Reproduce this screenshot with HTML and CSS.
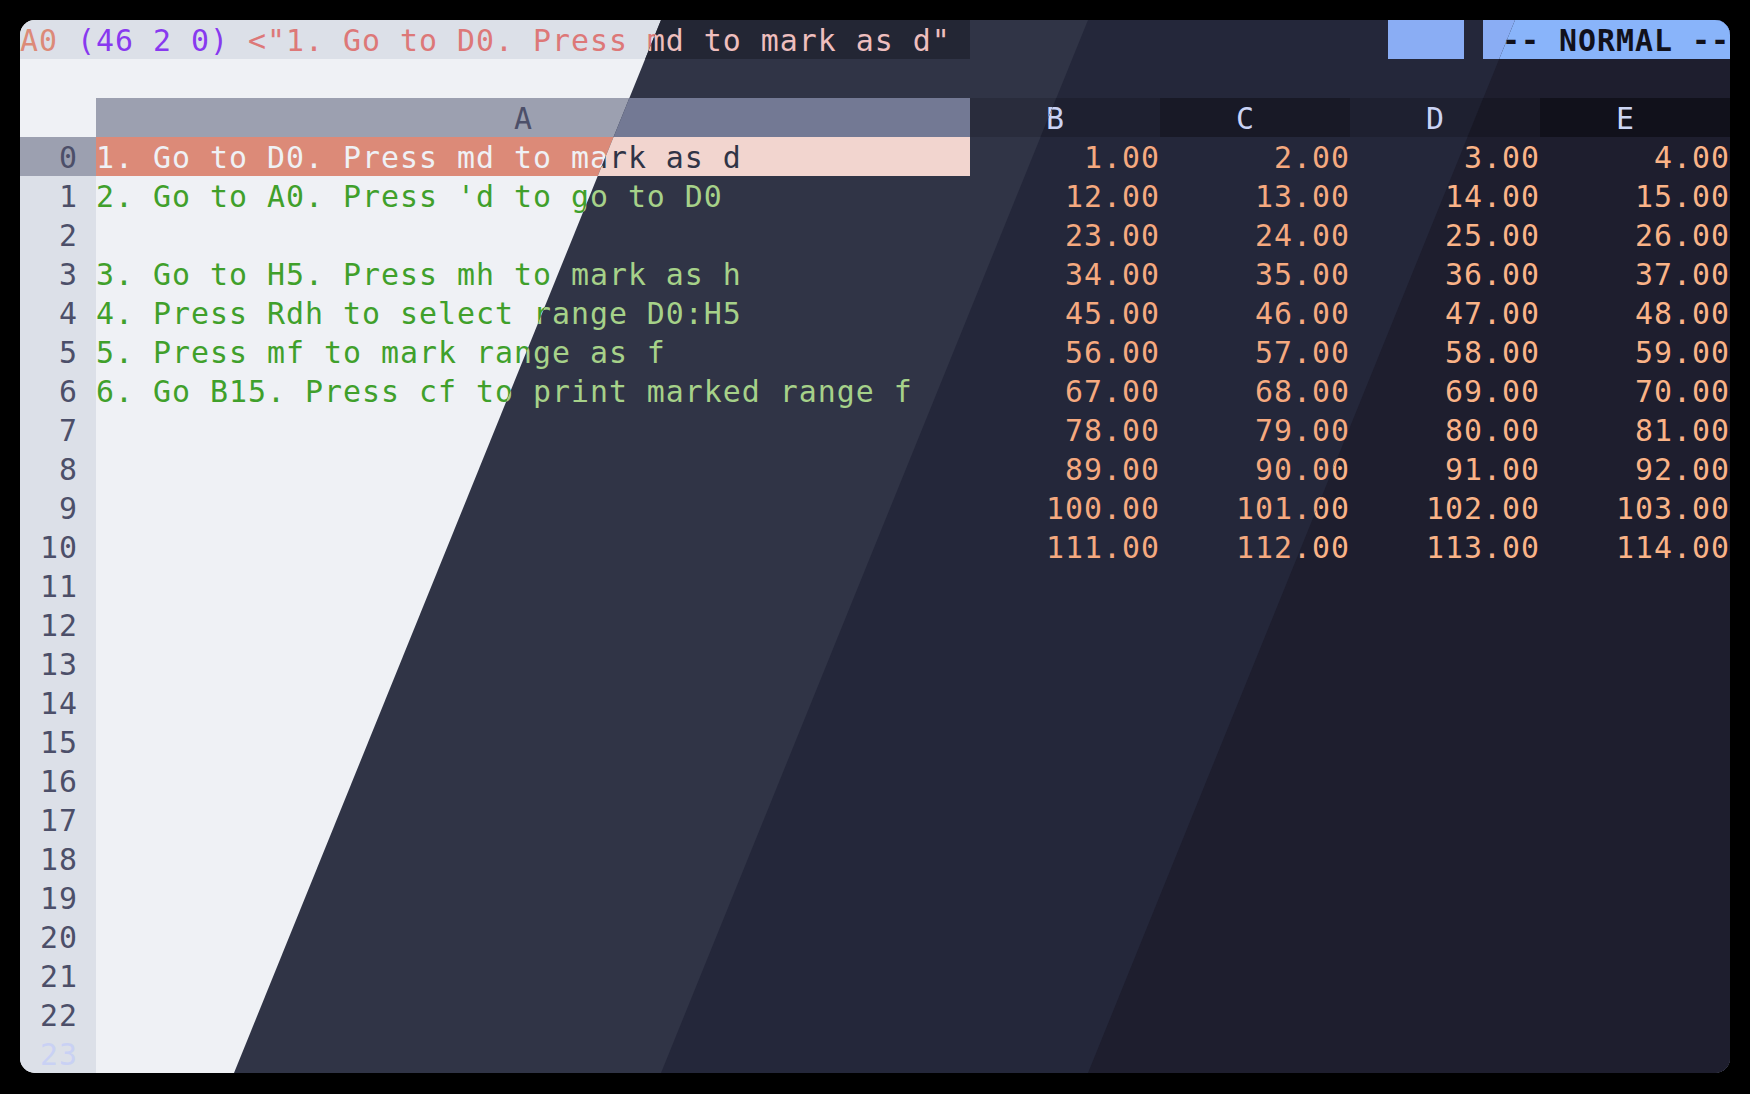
FILE: index.html
```html
<!DOCTYPE html>
<html lang="en">
<head>
<meta charset="utf-8">
<title>sc-im catppuccin</title>
<link rel="stylesheet" href="styles.css">
</head>
<body>
<div class="window">

<div class="layer latte">
<div class="line"><span class="st-text"><span class="rose">A0</span> <span class="mauve">(46 2 0)</span> <span class="flam">&lt;"1. Go to D0. Press md to mark as d"</span> </span><span class="st-gap"></span><span class="st-box"></span><span class="st-sp"></span><span class="st-mode"> -- NORMAL --</span></div>
<div class="line"></div>
<div class="line"><span class="hc"></span><span class="ha">A</span><span class="hb odd">B</span><span class="hb even">C</span><span class="hb odd">D</span><span class="hb even">E</span></div>
<div class="line"><span class="rn sel">0</span><span class="ca cur">1. Go to D0. Press md to mark as d</span><span class="num">1.00</span><span class="num">2.00</span><span class="num">3.00</span><span class="num">4.00</span></div>
<div class="line"><span class="rn">1</span><span class="ca">2. Go to A0. Press 'd to go to D0</span><span class="num">12.00</span><span class="num">13.00</span><span class="num">14.00</span><span class="num">15.00</span></div>
<div class="line"><span class="rn">2</span><span class="ca"></span><span class="num">23.00</span><span class="num">24.00</span><span class="num">25.00</span><span class="num">26.00</span></div>
<div class="line"><span class="rn">3</span><span class="ca">3. Go to H5. Press mh to mark as h</span><span class="num">34.00</span><span class="num">35.00</span><span class="num">36.00</span><span class="num">37.00</span></div>
<div class="line"><span class="rn">4</span><span class="ca">4. Press Rdh to select range D0:H5</span><span class="num">45.00</span><span class="num">46.00</span><span class="num">47.00</span><span class="num">48.00</span></div>
<div class="line"><span class="rn">5</span><span class="ca">5. Press mf to mark range as f</span><span class="num">56.00</span><span class="num">57.00</span><span class="num">58.00</span><span class="num">59.00</span></div>
<div class="line"><span class="rn">6</span><span class="ca">6. Go B15. Press cf to print marked range f</span><span class="num">67.00</span><span class="num">68.00</span><span class="num">69.00</span><span class="num">70.00</span></div>
<div class="line"><span class="rn">7</span><span class="ca"></span><span class="num">78.00</span><span class="num">79.00</span><span class="num">80.00</span><span class="num">81.00</span></div>
<div class="line"><span class="rn">8</span><span class="ca"></span><span class="num">89.00</span><span class="num">90.00</span><span class="num">91.00</span><span class="num">92.00</span></div>
<div class="line"><span class="rn">9</span><span class="ca"></span><span class="num">100.00</span><span class="num">101.00</span><span class="num">102.00</span><span class="num">103.00</span></div>
<div class="line"><span class="rn">10</span><span class="ca"></span><span class="num">111.00</span><span class="num">112.00</span><span class="num">113.00</span><span class="num">114.00</span></div>
<div class="line"><span class="rn">11</span></div>
<div class="line"><span class="rn">12</span></div>
<div class="line"><span class="rn">13</span></div>
<div class="line"><span class="rn">14</span></div>
<div class="line"><span class="rn">15</span></div>
<div class="line"><span class="rn">16</span></div>
<div class="line"><span class="rn">17</span></div>
<div class="line"><span class="rn">18</span></div>
<div class="line"><span class="rn">19</span></div>
<div class="line"><span class="rn">20</span></div>
<div class="line"><span class="rn">21</span></div>
<div class="line"><span class="rn">22</span></div>
<div class="line"><span class="rn faint">23</span></div>
</div>

<div class="layer frappe">
<div class="line"><span class="st-text"><span class="rose">A0</span> <span class="mauve">(46 2 0)</span> <span class="flam">&lt;"1. Go to D0. Press md to mark as d"</span> </span><span class="st-gap"></span><span class="st-box"></span><span class="st-sp"></span><span class="st-mode"> -- NORMAL --</span></div>
<div class="line"></div>
<div class="line"><span class="hc"></span><span class="ha">A</span><span class="hb odd">B</span><span class="hb even">C</span><span class="hb odd">D</span><span class="hb even">E</span></div>
<div class="line"><span class="rn sel">0</span><span class="ca cur">1. Go to D0. Press md to mark as d</span><span class="num">1.00</span><span class="num">2.00</span><span class="num">3.00</span><span class="num">4.00</span></div>
<div class="line"><span class="rn">1</span><span class="ca">2. Go to A0. Press 'd to go to D0</span><span class="num">12.00</span><span class="num">13.00</span><span class="num">14.00</span><span class="num">15.00</span></div>
<div class="line"><span class="rn">2</span><span class="ca"></span><span class="num">23.00</span><span class="num">24.00</span><span class="num">25.00</span><span class="num">26.00</span></div>
<div class="line"><span class="rn">3</span><span class="ca">3. Go to H5. Press mh to mark as h</span><span class="num">34.00</span><span class="num">35.00</span><span class="num">36.00</span><span class="num">37.00</span></div>
<div class="line"><span class="rn">4</span><span class="ca">4. Press Rdh to select range D0:H5</span><span class="num">45.00</span><span class="num">46.00</span><span class="num">47.00</span><span class="num">48.00</span></div>
<div class="line"><span class="rn">5</span><span class="ca">5. Press mf to mark range as f</span><span class="num">56.00</span><span class="num">57.00</span><span class="num">58.00</span><span class="num">59.00</span></div>
<div class="line"><span class="rn">6</span><span class="ca">6. Go B15. Press cf to print marked range f</span><span class="num">67.00</span><span class="num">68.00</span><span class="num">69.00</span><span class="num">70.00</span></div>
<div class="line"><span class="rn">7</span><span class="ca"></span><span class="num">78.00</span><span class="num">79.00</span><span class="num">80.00</span><span class="num">81.00</span></div>
<div class="line"><span class="rn">8</span><span class="ca"></span><span class="num">89.00</span><span class="num">90.00</span><span class="num">91.00</span><span class="num">92.00</span></div>
<div class="line"><span class="rn">9</span><span class="ca"></span><span class="num">100.00</span><span class="num">101.00</span><span class="num">102.00</span><span class="num">103.00</span></div>
<div class="line"><span class="rn">10</span><span class="ca"></span><span class="num">111.00</span><span class="num">112.00</span><span class="num">113.00</span><span class="num">114.00</span></div>
<div class="line"><span class="rn">11</span></div>
<div class="line"><span class="rn">12</span></div>
<div class="line"><span class="rn">13</span></div>
<div class="line"><span class="rn">14</span></div>
<div class="line"><span class="rn">15</span></div>
<div class="line"><span class="rn">16</span></div>
<div class="line"><span class="rn">17</span></div>
<div class="line"><span class="rn">18</span></div>
<div class="line"><span class="rn">19</span></div>
<div class="line"><span class="rn">20</span></div>
<div class="line"><span class="rn">21</span></div>
<div class="line"><span class="rn">22</span></div>
<div class="line"><span class="rn faint">23</span></div>
</div>

<div class="layer macchiato">
<div class="line"><span class="st-text"><span class="rose">A0</span> <span class="mauve">(46 2 0)</span> <span class="flam">&lt;"1. Go to D0. Press md to mark as d"</span> </span><span class="st-gap"></span><span class="st-box"></span><span class="st-sp"></span><span class="st-mode"> -- NORMAL --</span></div>
<div class="line"></div>
<div class="line"><span class="hc"></span><span class="ha">A</span><span class="hb odd">B</span><span class="hb even">C</span><span class="hb odd">D</span><span class="hb even">E</span></div>
<div class="line"><span class="rn sel">0</span><span class="ca cur">1. Go to D0. Press md to mark as d</span><span class="num">1.00</span><span class="num">2.00</span><span class="num">3.00</span><span class="num">4.00</span></div>
<div class="line"><span class="rn">1</span><span class="ca">2. Go to A0. Press 'd to go to D0</span><span class="num">12.00</span><span class="num">13.00</span><span class="num">14.00</span><span class="num">15.00</span></div>
<div class="line"><span class="rn">2</span><span class="ca"></span><span class="num">23.00</span><span class="num">24.00</span><span class="num">25.00</span><span class="num">26.00</span></div>
<div class="line"><span class="rn">3</span><span class="ca">3. Go to H5. Press mh to mark as h</span><span class="num">34.00</span><span class="num">35.00</span><span class="num">36.00</span><span class="num">37.00</span></div>
<div class="line"><span class="rn">4</span><span class="ca">4. Press Rdh to select range D0:H5</span><span class="num">45.00</span><span class="num">46.00</span><span class="num">47.00</span><span class="num">48.00</span></div>
<div class="line"><span class="rn">5</span><span class="ca">5. Press mf to mark range as f</span><span class="num">56.00</span><span class="num">57.00</span><span class="num">58.00</span><span class="num">59.00</span></div>
<div class="line"><span class="rn">6</span><span class="ca">6. Go B15. Press cf to print marked range f</span><span class="num">67.00</span><span class="num">68.00</span><span class="num">69.00</span><span class="num">70.00</span></div>
<div class="line"><span class="rn">7</span><span class="ca"></span><span class="num">78.00</span><span class="num">79.00</span><span class="num">80.00</span><span class="num">81.00</span></div>
<div class="line"><span class="rn">8</span><span class="ca"></span><span class="num">89.00</span><span class="num">90.00</span><span class="num">91.00</span><span class="num">92.00</span></div>
<div class="line"><span class="rn">9</span><span class="ca"></span><span class="num">100.00</span><span class="num">101.00</span><span class="num">102.00</span><span class="num">103.00</span></div>
<div class="line"><span class="rn">10</span><span class="ca"></span><span class="num">111.00</span><span class="num">112.00</span><span class="num">113.00</span><span class="num">114.00</span></div>
<div class="line"><span class="rn">11</span></div>
<div class="line"><span class="rn">12</span></div>
<div class="line"><span class="rn">13</span></div>
<div class="line"><span class="rn">14</span></div>
<div class="line"><span class="rn">15</span></div>
<div class="line"><span class="rn">16</span></div>
<div class="line"><span class="rn">17</span></div>
<div class="line"><span class="rn">18</span></div>
<div class="line"><span class="rn">19</span></div>
<div class="line"><span class="rn">20</span></div>
<div class="line"><span class="rn">21</span></div>
<div class="line"><span class="rn">22</span></div>
<div class="line"><span class="rn faint">23</span></div>
</div>

<div class="layer mocha">
<div class="line"><span class="st-text"><span class="rose">A0</span> <span class="mauve">(46 2 0)</span> <span class="flam">&lt;"1. Go to D0. Press md to mark as d"</span> </span><span class="st-gap"></span><span class="st-box"></span><span class="st-sp"></span><span class="st-mode"> -- NORMAL --</span></div>
<div class="line"></div>
<div class="line"><span class="hc"></span><span class="ha">A</span><span class="hb odd">B</span><span class="hb even">C</span><span class="hb odd">D</span><span class="hb even">E</span></div>
<div class="line"><span class="rn sel">0</span><span class="ca cur">1. Go to D0. Press md to mark as d</span><span class="num">1.00</span><span class="num">2.00</span><span class="num">3.00</span><span class="num">4.00</span></div>
<div class="line"><span class="rn">1</span><span class="ca">2. Go to A0. Press 'd to go to D0</span><span class="num">12.00</span><span class="num">13.00</span><span class="num">14.00</span><span class="num">15.00</span></div>
<div class="line"><span class="rn">2</span><span class="ca"></span><span class="num">23.00</span><span class="num">24.00</span><span class="num">25.00</span><span class="num">26.00</span></div>
<div class="line"><span class="rn">3</span><span class="ca">3. Go to H5. Press mh to mark as h</span><span class="num">34.00</span><span class="num">35.00</span><span class="num">36.00</span><span class="num">37.00</span></div>
<div class="line"><span class="rn">4</span><span class="ca">4. Press Rdh to select range D0:H5</span><span class="num">45.00</span><span class="num">46.00</span><span class="num">47.00</span><span class="num">48.00</span></div>
<div class="line"><span class="rn">5</span><span class="ca">5. Press mf to mark range as f</span><span class="num">56.00</span><span class="num">57.00</span><span class="num">58.00</span><span class="num">59.00</span></div>
<div class="line"><span class="rn">6</span><span class="ca">6. Go B15. Press cf to print marked range f</span><span class="num">67.00</span><span class="num">68.00</span><span class="num">69.00</span><span class="num">70.00</span></div>
<div class="line"><span class="rn">7</span><span class="ca"></span><span class="num">78.00</span><span class="num">79.00</span><span class="num">80.00</span><span class="num">81.00</span></div>
<div class="line"><span class="rn">8</span><span class="ca"></span><span class="num">89.00</span><span class="num">90.00</span><span class="num">91.00</span><span class="num">92.00</span></div>
<div class="line"><span class="rn">9</span><span class="ca"></span><span class="num">100.00</span><span class="num">101.00</span><span class="num">102.00</span><span class="num">103.00</span></div>
<div class="line"><span class="rn">10</span><span class="ca"></span><span class="num">111.00</span><span class="num">112.00</span><span class="num">113.00</span><span class="num">114.00</span></div>
<div class="line"><span class="rn">11</span></div>
<div class="line"><span class="rn">12</span></div>
<div class="line"><span class="rn">13</span></div>
<div class="line"><span class="rn">14</span></div>
<div class="line"><span class="rn">15</span></div>
<div class="line"><span class="rn">16</span></div>
<div class="line"><span class="rn">17</span></div>
<div class="line"><span class="rn">18</span></div>
<div class="line"><span class="rn">19</span></div>
<div class="line"><span class="rn">20</span></div>
<div class="line"><span class="rn">21</span></div>
<div class="line"><span class="rn">22</span></div>
<div class="line"><span class="rn faint">23</span></div>
</div>

</div>
</body>
</html>
```
FILE: styles.css
```css
* {
  box-sizing: border-box;
  margin: 0;
  padding: 0;
}

html {
  background: #000;
}

body {
  background: #000;
  padding: 20px;
  font-family: "DejaVu Sans Mono", monospace;
  font-size: 29.9px;
  letter-spacing: 1px;
  line-height: 39px;
}

.window {
  width: 1710px;
  height: 1053px;
  border-radius: 15px;
  overflow: hidden;
  display: grid;
}

.layer {
  grid-area: 1 / 1;
  display: flex;
  flex-direction: column;
  background: var(--base);
  color: var(--text);
}

.latte {
  --base: #eff1f5; --mantle: #e6e9ef; --crust: #dce0e8; --text: #4c4f69;
  --ov0: #9ca0b0; --rose: #dc8a78; --flam: #dd7878; --mauve: #8839ef;
  --green: #40a02b; --peach: #fe640b; --blue: #1e66f5;
}
.frappe {
  --base: #303446; --mantle: #292c3c; --crust: #232634; --text: #c6d0f5;
  --ov0: #737994; --rose: #f2d5cf; --flam: #eebebe; --mauve: #ca9ee6;
  --green: #a6d189; --peach: #ef9f76; --blue: #8caaee;
  clip-path: polygon(641px 0, 100% 0, 100% 100%, 214px 100%);
}
.macchiato {
  --base: #24273a; --mantle: #1e2030; --crust: #181926; --text: #cad3f5;
  --ov0: #6e738d; --rose: #f4dbd6; --flam: #f0c6c6; --mauve: #c6a0f6;
  --green: #a6da95; --peach: #f5a97f; --blue: #8aadf4;
  clip-path: polygon(1068px 0, 100% 0, 100% 100%, 641px 100%);
}
.mocha {
  --base: #1e1e2e; --mantle: #181825; --crust: #11111b; --text: #cdd6f4;
  --ov0: #6c7086; --rose: #f5e0dc; --flam: #f2cdcd; --mauve: #cba6f7;
  --green: #a6e3a1; --peach: #fab387; --blue: #89b4fa;
  clip-path: polygon(1495px 0, 100% 0, 100% 100%, 1068px 100%);
}

.line {
  display: flex;
  height: 39px;
  flex: none;
}

.line > span {
  flex: none;
  height: 39px;
  padding-top: 1px;
  white-space: pre;
}

/* status line */
.st-text {
  width: 950px;
  background: var(--crust);
}
.st-text span { white-space: pre; }
.rose { color: var(--rose); }
.mauve { color: var(--mauve); }
.flam { color: var(--flam); }
.st-gap { width: 418px; }
.st-box { width: 76px; background: var(--blue); }
.st-sp { width: 19px; }
.st-mode {
  width: 247px;
  background: var(--blue);
  color: var(--crust);
  font-weight: bold;
}

/* header */
.hc { width: 76px; }
.line > .ha {
  width: 874px;
  padding-left: 418px;
  background: var(--ov0);
  color: var(--text);
}
.latte .ha { color: #4c4f69; }
.line > .hb {
  width: 190px;
  padding-left: 76px;
  color: var(--text);
}
.hb.odd { background: var(--mantle); }
.hb.even { background: var(--crust); }

/* rows */
.line > .rn {
  width: 76px;
  padding-right: 18px;
  text-align: right;
  background: var(--crust);
  color: var(--text);
}
.line > .rn.sel { background: var(--ov0); }
.line > .rn.faint { color: #c9d1f4; }

.ca {
  width: 874px;
  color: var(--green);
}
.ca.cur {
  background: var(--rose);
  color: var(--base);
}

.num {
  width: 190px;
  text-align: right;
  color: var(--peach);
}
```
